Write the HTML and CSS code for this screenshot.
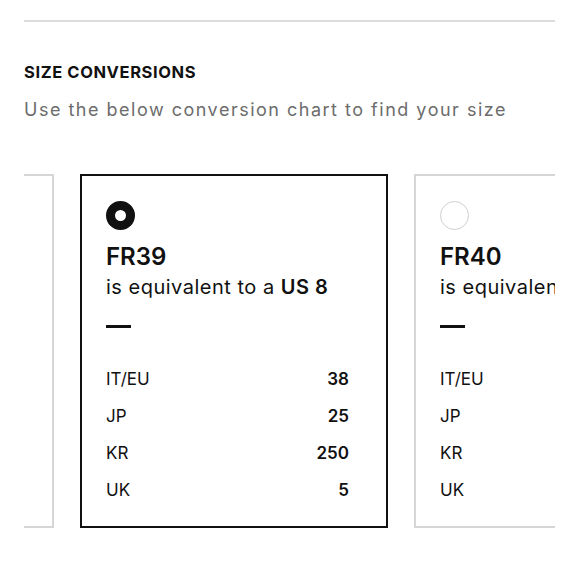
FILE: index.html
```html
<!DOCTYPE html>
<html lang="en">
<head>
<meta charset="utf-8">
<title>Size conversions</title>
<link rel="stylesheet" href="styles.css">
</head>
<body>
<div class="page">
  <div class="rule"></div>
  <h2 class="title">SIZE CONVERSIONS</h2>
  <p class="subtitle">Use the below conversion chart to find your size</p>
  <div class="carousel">
    <div class="track">
      <div class="card">
        <span class="radio"></span>
        <div class="size">FR38</div>
        <div class="equiv">is equivalent to a <b>US 7</b></div>
        <div class="dash"></div>
        <dl class="table">
          <div class="row"><dt>IT/EU</dt><dd>37</dd></div>
          <div class="row"><dt>JP</dt><dd>24</dd></div>
          <div class="row"><dt>KR</dt><dd>240</dd></div>
          <div class="row"><dt>UK</dt><dd>4</dd></div>
        </dl>
      </div>
      <div class="card card-selected">
        <span class="radio radio-on"></span>
        <div class="size">FR39</div>
        <div class="equiv">is equivalent to a <b>US 8</b></div>
        <div class="dash"></div>
        <dl class="table">
          <div class="row"><dt>IT/EU</dt><dd>38</dd></div>
          <div class="row"><dt>JP</dt><dd>25</dd></div>
          <div class="row"><dt>KR</dt><dd>250</dd></div>
          <div class="row"><dt>UK</dt><dd>5</dd></div>
        </dl>
      </div>
      <div class="card">
        <span class="radio"></span>
        <div class="size">FR40</div>
        <div class="equiv">is equivalent to a <b>US 9</b></div>
        <div class="dash"></div>
        <dl class="table">
          <div class="row"><dt>IT/EU</dt><dd>39</dd></div>
          <div class="row"><dt>JP</dt><dd>26</dd></div>
          <div class="row"><dt>KR</dt><dd>260</dd></div>
          <div class="row"><dt>UK</dt><dd>6</dd></div>
        </dl>
      </div>
    </div>
  </div>
</div>
</body>
</html>
```

FILE: styles.css
```css
* { box-sizing: border-box; }

html, body {
  margin: 0;
  padding: 0;
  background: #ffffff;
}

body {
  font-family: Inter, "Liberation Sans", Arial, sans-serif;
  color: #111111;
}

.page {
  width: 580px;
  padding: 20px 25px 0 24px;
}

.rule {
  height: 2px;
  background: #dcdcdc;
}

.title {
  margin: 40px 0 0;
  font-size: 16.5px;
  line-height: 20px;
  font-weight: 700;
  letter-spacing: 0.6px;
}

.subtitle {
  margin: 16px 0 0;
  font-size: 18px;
  line-height: 24px;
  color: #6c6c6c;
  letter-spacing: 1.5px;
}

.carousel {
  margin-top: 52px;
  overflow: hidden;
}

.track {
  display: flex;
  gap: 26px;
  margin-left: -278px;
}

.card {
  flex: 0 0 308px;
  height: 354px;
  border: 2px solid #d6d6d6;
  padding: 25px 37px 17px 24px;
  display: flex;
  flex-direction: column;
  align-items: stretch;
}

.card-selected {
  border-color: #111111;
}

.radio {
  display: block;
  width: 29px;
  height: 29px;
  border-radius: 50%;
  border: 1.5px solid #cfcfcf;
}

.radio-on {
  border: 9px solid #111111;
}

.size {
  margin-top: 12px;
  font-size: 24px;
  line-height: 30px;
  font-weight: 600;
}

.equiv {
  margin-top: 2px;
  font-size: 20px;
  line-height: 26px;
  letter-spacing: 0.5px;
  white-space: nowrap;
}

.equiv b {
  font-weight: 600;
}

.dash {
  margin-top: 25px;
  width: 25px;
  height: 3px;
  background: #111111;
}

.table {
  margin: 33px 0 0;
}

.row {
  display: flex;
  justify-content: space-between;
  font-size: 17px;
  line-height: 37px;
}

.row dt {
  margin: 0;
}

.row dd {
  margin: 0;
  font-weight: 600;
}
```
